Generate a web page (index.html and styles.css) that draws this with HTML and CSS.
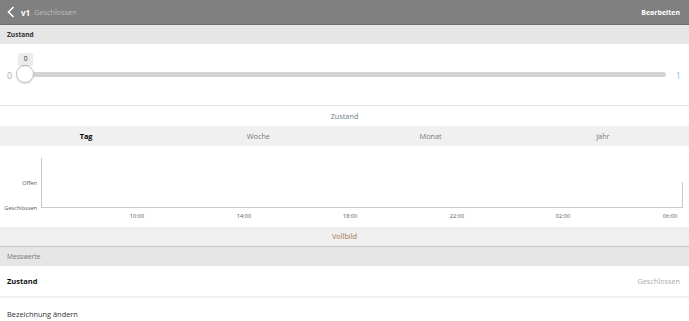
FILE: index.html
```html
<!DOCTYPE html>
<html lang="de">
<head>
    <meta charset="UTF-8"/>
    <link rel="stylesheet" href="styles.css">
</head>
<body>
    <div class="topbar">
        <div class="topbar_left">
            <svg class="back" width="8" height="12" viewBox="0 0 8 12"><path d="M6.5 1 L1.5 6 L6.5 11" fill="none" stroke="#fff" stroke-width="1.6"/></svg>
            <span class="title">v1</span>
            <span class="subtitle">Geschlossen</span>
        </div>
        <span class="edit">Bearbeiten</span>
    </div>

    <div class="section_head dark">Zustand</div>

    <div class="slider_box">
        <span class="range_min">0</span>
        <div class="slider">
            <div class="track"></div>
            <div class="knob"></div>
            <div class="bubble">0</div>
        </div>
        <span class="range_max">1</span>
    </div>

    <div class="chart_title">Zustand</div>
    <div class="tabs">
        <div class="tab active">Tag</div>
        <div class="tab">Woche</div>
        <div class="tab">Monat</div>
        <div class="tab">Jahr</div>
    </div>

    <div class="chart">
        <svg width="689" height="81" viewBox="0 0 689 81">
            <line x1="41.5" y1="12" x2="41.5" y2="61" stroke="#c8c8c8" stroke-width="1"/>
            <line x1="41" y1="61.5" x2="683" y2="61.5" stroke="#c8c8c8" stroke-width="1"/>
            <line x1="682.5" y1="36" x2="682.5" y2="61" stroke="#c8c8c8" stroke-width="1"/>
            <text x="37" y="39" class="ylab">Offen</text>
            <text x="37" y="63.5" class="ylab">Geschlossen</text>
            <text x="137" y="71.5" class="xlab">10:00</text>
            <text x="244" y="71.5" class="xlab">14:00</text>
            <text x="350" y="71.5" class="xlab">18:00</text>
            <text x="457" y="71.5" class="xlab">22:00</text>
            <text x="563" y="71.5" class="xlab">02:00</text>
            <text x="670" y="71.5" class="xlab">06:00</text>
        </svg>
    </div>

    <div class="fullscreen">Vollbild</div>

    <div class="section_head">Messwerte</div>
    <div class="row">
        <span class="row_label">Zustand</span>
        <span class="row_value">Geschlossen</span>
    </div>
    <div class="rename">Bezeichnung ändern</div>
</body>
</html>
```

FILE: styles.css
```css
body {
    margin: 0;
    font-family: "Open Sans", "Noto Sans", sans-serif;
    font-size: 7.4px;
    color: #222;
    background: #fff;
}

.topbar {
    height: 24px;
    background: #808080;
    border-bottom: 1px solid #6e6e6e;
    display: flex;
    align-items: center;
    justify-content: space-between;
    padding: 0 9px 0 7px;
}
.topbar_left {
    display: flex;
    align-items: center;
}
.back {
    margin-right: 6px;
}
.title {
    color: #fff;
    font-weight: bold;
    font-size: 8px;
    margin-right: 4px;
}
.subtitle {
    color: #bcbcbc;
    font-size: 7.3px;
}
.edit {
    color: #fff;
    font-weight: bold;
    font-size: 7px;
}

.section_head {
    height: 19px;
    line-height: 19px;
    background: #e6e6e6;
    padding-left: 7px;
    font-size: 6.6px;
    color: #777;
}
.section_head.dark {
    color: #333;
    font-weight: bold;
}

.slider_box {
    height: 61px;
    display: flex;
    align-items: center;
    padding: 0 8px 0 7px;
    border-bottom: 1px solid #e2e2e2;
}
.range_min, .range_max {
    font-size: 9px;
    color: #aaa;
    padding-top: 1px;
}
.range_max {
    color: #8fc1da;
    margin-left: 10px;
}
.slider {
    flex: 1;
    position: relative;
    height: 61px;
    margin-left: 4px;
}
.track {
    position: absolute;
    left: 2px;
    right: 0;
    top: 28px;
    height: 5px;
    border-radius: 3px;
    background: #d3d3d3;
}
.knob {
    position: absolute;
    left: 0;
    top: 21px;
    width: 18px;
    height: 18px;
    border-radius: 50%;
    background: #fff;
    border: 1px solid #c4c4c4;
    box-sizing: border-box;
    box-shadow: 0 1px 2px rgba(0,0,0,0.15);
}
.bubble {
    position: absolute;
    left: 2px;
    top: 9px;
    width: 15px;
    height: 12px;
    line-height: 12px;
    text-align: center;
    background: #ececec;
    border-radius: 2px;
    font-size: 6.6px;
    color: #333;
    box-shadow: 0 1px 1px rgba(0,0,0,0.12);
}

.chart_title {
    height: 20px;
    line-height: 20px;
    text-align: center;
    font-size: 7.3px;
    color: #6f7f8a;
}
.tabs {
    display: grid;
    grid-template-columns: repeat(4, 1fr);
    height: 20px;
    background: #f0f0f0;
}
.tab {
    text-align: center;
    line-height: 20px;
    font-size: 7.3px;
    color: #777;
}
.tab.active {
    color: #000;
    font-weight: bold;
}

.chart {
    height: 81px;
}
.chart svg {
    display: block;
}
.ylab {
    font-family: "Open Sans", sans-serif;
    font-size: 5.6px;
    fill: #555;
    text-anchor: end;
}
.xlab {
    font-family: "Open Sans", sans-serif;
    font-size: 5.6px;
    fill: #555;
    text-anchor: middle;
}

.fullscreen {
    height: 19px;
    line-height: 19px;
    text-align: center;
    background: #f0f0f0;
    border-bottom: 1px solid #c6c6c6;
    color: #a07850;
    font-size: 7.3px;
}

.row {
    height: 30px;
    display: flex;
    align-items: center;
    justify-content: space-between;
    padding: 0 9px 0 7px;
    border-bottom: 2px solid #f0f0f0;
}
.row_label {
    font-weight: bold;
    font-size: 7.5px;
    color: #111;
}
.row_value {
    color: #aaa;
    font-size: 7.3px;
}
.rename {
    padding-left: 7px;
    height: 32px;
    line-height: 32px;
    font-size: 7.4px;
    color: #333;
}
```
